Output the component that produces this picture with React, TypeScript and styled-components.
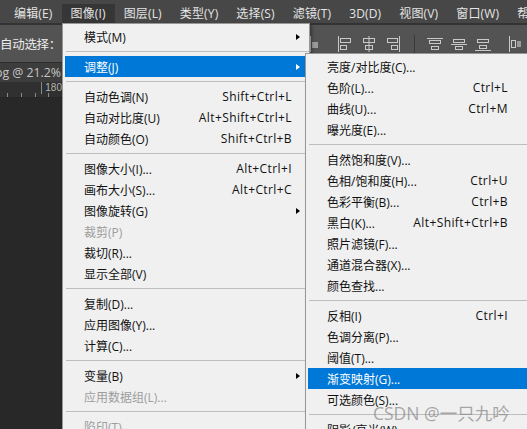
import React from "react";
import styled, { createGlobalStyle } from "styled-components";

const Global = createGlobalStyle`
  html, body { margin: 0; padding: 0; overflow: hidden; background: #282828; }
  * { box-sizing: border-box; }
`;

const FONT = `"Open Sans", "Noto Sans CJK SC", sans-serif`;

const Screen = styled.div`
  position: relative;
  width: 527px;
  height: 429px;
  overflow: hidden;
  display: flex;
  flex-direction: column;
  background: #282828;
  font-family: ${FONT};
`;

const MenuBar = styled.div`
  height: 23px;
  flex: 0 0 23px;
  display: flex;
  padding-left: 5px;
  background: #474747;
`;

const MenuTitle = styled.div<{ $active?: boolean }>`
  margin-top: 4px;
  height: 19px;
  line-height: 19px;
  padding: 0 9px 0 9px;
  font-size: 12px;
  letter-spacing: 0.15px;
  color: #e4e4e4;
  white-space: nowrap;
  background: ${(p) => (p.$active ? "#363636" : "transparent")};
`;

const BarRule = styled.div`
  height: 2px;
  flex: 0 0 2px;
  background: #333333;
`;

const OptionsBar = styled.div`
  height: 37px;
  flex: 0 0 37px;
  display: flex;
  align-items: center;
  background: #535353;
`;

const OptionLabel = styled.div`
  flex: 0 0 304px;
  font-size: 12.5px;
  color: #ececec;
  white-space: nowrap;
  letter-spacing: -0.3px;
`;

const IconGroup = styled.div`
  display: flex;
  align-items: center;
  gap: 8px;
`;

const IconSep = styled.div`
  width: 1px;
  height: 18px;
  margin: 0 4px 0 5px;
  background: #3a3a3a;
`;

const IconBox = styled.svg<{ $push?: number }>`
  width: 16px;
  height: 16px;
  flex: 0 0 16px;
  margin-left: ${(p) => p.$push ?? 0}px;
`;

const TabRow = styled.div`
  height: 20px;
  flex: 0 0 20px;
  width: 62px;
  display: flex;
  justify-content: flex-end;
  align-items: center;
  overflow: hidden;
  background: #3d3d3d;
  border-top: 1px solid #2c2c2c;
`;

const TabText = styled.span`
  font-size: 12.3px;
  color: #c6c6c6;
  white-space: nowrap;
  padding-right: 1px;
`;

const Ruler = styled.div`
  height: 16px;
  flex: 0 0 16px;
  width: 62px;
  display: flex;
  align-items: flex-start;
  background:
    repeating-linear-gradient(to right, transparent 0 7px, #8a8a8a 7px 8px, transparent 8px 13.8px) bottom / 100% 4px no-repeat,
    #303030;
  border-bottom: 1px solid #262626;
`;

const RulerMajor = styled.div`
  width: 1px;
  height: 12px;
  margin-left: 41px;
  background: #8a8a8a;
`;

const RulerLabel = styled.span`
  font-size: 10px;
  line-height: 12px;
  color: #b5b5b5;
  margin-left: 4px;
  font-family: "Liberation Sans", sans-serif;
`;

const Canvas = styled.div`
  flex: 1;
  background: #282828;
`;

const Menu = styled.div<{ $left: number; $top: number; $width: number }>`
  position: absolute;
  left: ${(p) => p.$left}px;
  top: ${(p) => p.$top}px;
  width: ${(p) => p.$width}px;
  padding: 2px 0 2px;
  background: #f0f0f0;
  border: 1px solid #979797;
  box-shadow: 2px 2px 3px rgba(0, 0, 0, 0.35);
  font-size: 12px;
`;

const Item = styled.div<{ $active?: boolean; $disabled?: boolean; $tail: number }>`
  display: grid;
  grid-template-columns: 1fr auto ${(p) => p.$tail}px;
  align-items: center;
  height: 21px;
  margin: 0 2px;
  padding-left: 19px;
  white-space: nowrap;
  color: ${(p) => (p.$active ? "#ffffff" : p.$disabled ? "#9d9d9d" : "#111111")};
  background: ${(p) => (p.$active ? "#0078d7" : "transparent")};
`;

const Shortcut = styled.span`
  text-align: right;
  letter-spacing: 0.4px;
`;

const Arrow = styled.span<{ $light?: boolean }>`
  justify-self: start;
  margin-left: 4px;
  width: 0;
  height: 0;
  border-top: 3.5px solid transparent;
  border-bottom: 3.5px solid transparent;
  border-left: 4px solid ${(p) => (p.$light ? "#ffffff" : "#000000")};
`;

const Separator = styled.div`
  height: 1px;
  margin: 4px 0 4px 3px;
  background: #bdbdbd;
`;

const Watermark = styled.div`
  position: absolute;
  left: 373px;
  top: 400px;
  font-size: 17.5px;
  color: rgba(140, 140, 140, 0.75);
  white-space: nowrap;
  font-family: ${FONT};
`;

type Entry =
  | "sep"
  | { label: string; shortcut?: string; arrow?: boolean; disabled?: boolean; active?: boolean };

const mainMenu: Entry[] = [
  { label: "模式(M)", arrow: true },
  "sep",
  { label: "调整(J)", arrow: true, active: true },
  "sep",
  { label: "自动色调(N)", shortcut: "Shift+Ctrl+L" },
  { label: "自动对比度(U)", shortcut: "Alt+Shift+Ctrl+L" },
  { label: "自动颜色(O)", shortcut: "Shift+Ctrl+B" },
  "sep",
  { label: "图像大小(I)...", shortcut: "Alt+Ctrl+I" },
  { label: "画布大小(S)...", shortcut: "Alt+Ctrl+C" },
  { label: "图像旋转(G)", arrow: true },
  { label: "裁剪(P)", disabled: true },
  { label: "裁切(R)..." },
  { label: "显示全部(V)" },
  "sep",
  { label: "复制(D)..." },
  { label: "应用图像(Y)..." },
  { label: "计算(C)..." },
  "sep",
  { label: "变量(B)", arrow: true },
  { label: "应用数据组(L)...", disabled: true },
  "sep",
  { label: "陷印(T)...", disabled: true },
];

const subMenu: Entry[] = [
  { label: "亮度/对比度(C)..." },
  { label: "色阶(L)...", shortcut: "Ctrl+L" },
  { label: "曲线(U)...", shortcut: "Ctrl+M" },
  { label: "曝光度(E)..." },
  "sep",
  { label: "自然饱和度(V)..." },
  { label: "色相/饱和度(H)...", shortcut: "Ctrl+U" },
  { label: "色彩平衡(B)...", shortcut: "Ctrl+B" },
  { label: "黑白(K)...", shortcut: "Alt+Shift+Ctrl+B" },
  { label: "照片滤镜(F)..." },
  { label: "通道混合器(X)..." },
  { label: "颜色查找..." },
  "sep",
  { label: "反相(I)", shortcut: "Ctrl+I" },
  { label: "色调分离(P)..." },
  { label: "阈值(T)..." },
  { label: "渐变映射(G)...", active: true },
  { label: "可选颜色(S)..." },
  "sep",
  { label: "阴影/高光(W)..." },
];

const menuTitles = ["编辑(E)", "图像(I)", "图层(L)", "类型(Y)", "选择(S)", "滤镜(T)", "3D(D)", "视图(V)", "窗口(W)", "帮助(H)"];

type AlignKind = "left" | "hcenter" | "right" | "top" | "vmiddle" | "bottom" | "dist" | "edge";

function AlignIcon({ kind, push }: { kind: AlignKind; push?: number }) {
  const s = { fill: "none", stroke: "#c9c9c9", strokeWidth: 1 } as const;
  let body: React.ReactNode = null;
  switch (kind) {
    case "left":
      body = (<><line x1="1.5" y1="0" x2="1.5" y2="16" {...s} /><rect x="3.5" y="2.5" width="10" height="4" {...s} /><rect x="3.5" y="9.5" width="6" height="4" {...s} /></>);
      break;
    case "hcenter":
      body = (<><line x1="8" y1="0" x2="8" y2="16" {...s} /><rect x="2.5" y="2.5" width="11" height="4" {...s} /><rect x="4.5" y="9.5" width="7" height="4" {...s} /></>);
      break;
    case "right":
      body = (<><line x1="14.5" y1="0" x2="14.5" y2="16" {...s} /><rect x="2.5" y="2.5" width="10" height="4" {...s} /><rect x="6.5" y="9.5" width="6" height="4" {...s} /></>);
      break;
    case "top":
      body = (<><line x1="0" y1="2.5" x2="16" y2="2.5" {...s} /><rect x="2.5" y="4.5" width="11" height="3" {...s} /><rect x="4.5" y="10.5" width="7" height="3" {...s} /></>);
      break;
    case "vmiddle":
      body = (<><line x1="0" y1="8.5" x2="16" y2="8.5" {...s} /><rect x="2.5" y="3.5" width="11" height="3" {...s} /><rect x="4.5" y="10.5" width="7" height="3" {...s} /></>);
      break;
    case "bottom":
      body = (<><line x1="0" y1="14.5" x2="16" y2="14.5" {...s} /><rect x="2.5" y="3.5" width="11" height="3" {...s} /><rect x="4.5" y="9.5" width="7" height="3" {...s} /></>);
      break;
    case "dist":
      body = (<><line x1="1.5" y1="0" x2="1.5" y2="16" {...s} /><rect x="3.5" y="4.5" width="4" height="7" {...s} /><rect x="9" y="5" width="4" height="6" fill="#9a9a9a" /></>);
      break;
    case "edge":
      body = (<><line x1="6.5" y1="0" x2="6.5" y2="16" {...s} /><rect x="8" y="6" width="6" height="6" fill="#9a9a9a" /></>);
      break;
  }
  return (
    <IconBox viewBox="0 0 16 16" $push={push}>
      {body}
    </IconBox>
  );
}

function MenuList({ entries, tail }: { entries: Entry[]; tail: number }) {
  return (
    <>
      {entries.map((e, i) =>
        e === "sep" ? (
          <Separator key={i} />
        ) : (
          <Item key={i} $active={e.active} $disabled={e.disabled} $tail={tail}>
            <span>{e.label}</span>
            <Shortcut>{e.shortcut ?? ""}</Shortcut>
            {e.arrow ? <Arrow $light={e.active} /> : <span />}
          </Item>
        )
      )}
    </>
  );
}

export default function App() {
  return (
    <>
      <Global />
      <Screen>
        <MenuBar>
          {menuTitles.map((t) => (
            <MenuTitle key={t} $active={t === "图像(I)"}>
              {t}
            </MenuTitle>
          ))}
        </MenuBar>
        <BarRule />
        <OptionsBar>
          <OptionLabel>自动选择：</OptionLabel>
          <IconGroup>
            <AlignIcon kind="edge" />
            <AlignIcon kind="left" push={9} />
            <AlignIcon kind="hcenter" />
            <AlignIcon kind="right" />
            <IconSep />
            <AlignIcon kind="top" />
            <AlignIcon kind="vmiddle" />
            <AlignIcon kind="bottom" />
            <AlignIcon kind="dist" push={9} />
          </IconGroup>
        </OptionsBar>
        <TabRow>
          <TabText>1.jpg @ 21.2%</TabText>
        </TabRow>
        <Ruler>
          <RulerMajor />
          <RulerLabel>180</RulerLabel>
        </Ruler>
        <Canvas />

        <Menu $left={62} $top={23} $width={248}>
          <MenuList entries={mainMenu} tail={15} />
        </Menu>
        <Menu $left={305} $top={53} $width={230}>
          <MenuList entries={subMenu} tail={24} />
        </Menu>
        <Watermark>CSDN @一只九吟</Watermark>
      </Screen>
    </>
  );
}
